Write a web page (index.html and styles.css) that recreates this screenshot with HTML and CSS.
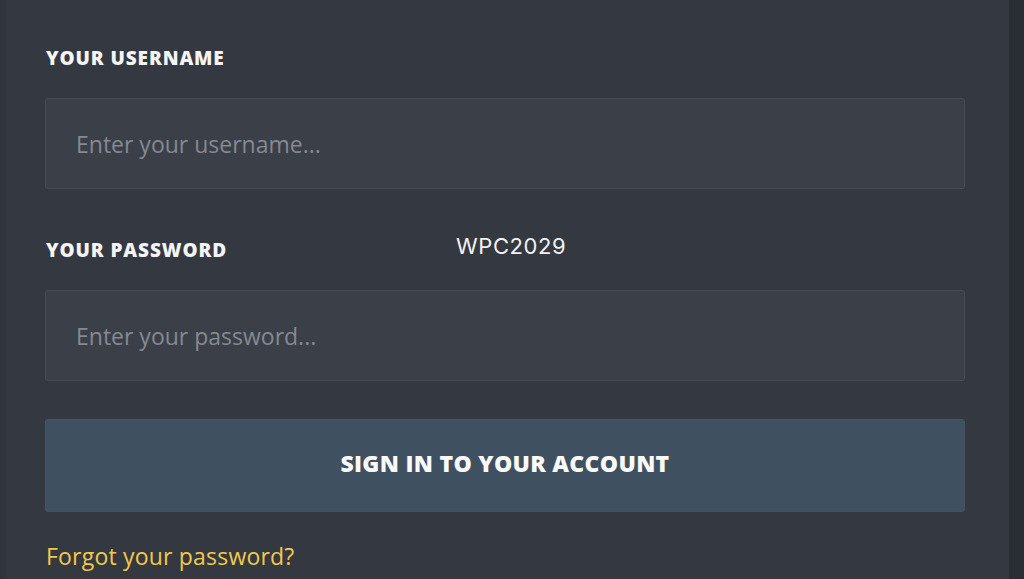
FILE: index.html
```html
<!DOCTYPE html>
<html lang="en">
<head>
  <meta charset="UTF-8">
  <title>Sign in</title>
  <meta name="viewport" content="width=device-width, initial-scale=1.0">
  <link rel="stylesheet" href="styles.css">
</head>
<body>

  <div class="panel">
    <form class="login">
      <label class="field-label" for="username">Your username</label>
      <input class="field" id="username" type="text" placeholder="Enter your username...">

      <label class="field-label" for="password">Your password</label>
      <input class="field" id="password" type="password" placeholder="Enter your password...">

      <button type="button" class="submit">Sign in to your account</button>

      <a class="forgot" href="#">Forgot your password?</a>
    </form>

    <!-- watermark -->
    <span class="mark">WPC2029</span>
  </div>

</body>
</html>
```

FILE: styles.css
```css
* {
  box-sizing: border-box;
  margin: 0;
  padding: 0;
}

body {
  background: #2a2d33;
  font-family: 'Open Sans', sans-serif;
  overflow: hidden;
}

.panel {
  position: relative;
  width: 1009px;
  height: 579px;
  background: #343841;
  border-left: 6px solid #30343c;
  padding: 46px 0 0 39px;
}

.login {
  display: flex;
  flex-direction: column;
  width: 920px;
}

.field-label {
  font-family: 'Open Sans', sans-serif;
  font-weight: 800;
  font-size: 19px;
  line-height: 24px;
  color: #f4f4f4;
  text-transform: uppercase;
  letter-spacing: 0.9px;
  margin-left: 1px;
}

.field {
  height: 91px;
  margin: 28px 0 49px;
  padding: 0 30px;
  background: #3b3f48;
  border: 1px solid #474b54;
  border-radius: 3px;
  font-family: 'Open Sans', sans-serif;
  font-size: 23px;
  color: #ddd;
  outline: none;
}

.field::placeholder {
  color: #858991;
}

.login .field:last-of-type {
  margin-bottom: 38px;
}

.submit {
  height: 93px;
  padding-bottom: 6px;
  background: #3f5060;
  border: 1px solid #45535f;
  border-radius: 3px;
  font-family: 'Open Sans', sans-serif;
  font-weight: 800;
  font-size: 23px;
  letter-spacing: 0.3px;
  color: #fafafa;
  text-transform: uppercase;
  cursor: pointer;
}

.forgot {
  margin-top: 28px;
  font-size: 23px;
  letter-spacing: 0.2px;
  color: #f2c84a;
  text-decoration: none;
  margin-left: 1px;
}

.mark {
  position: absolute;
  left: 450px;
  top: 233px;
  font-family: Inter, sans-serif;
  font-size: 22px;
  color: #f2f2f2;
  letter-spacing: 0.6px;
}
```
